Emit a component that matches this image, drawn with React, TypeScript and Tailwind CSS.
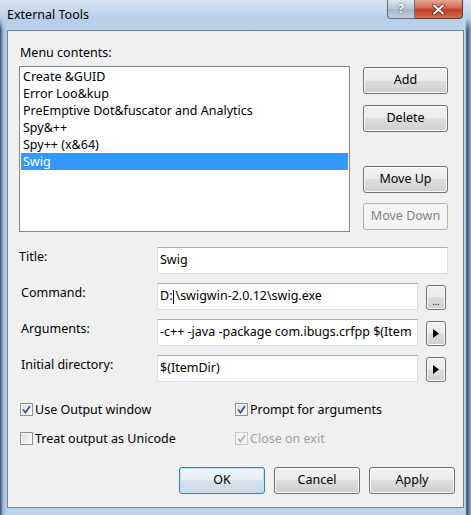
import { useState } from "react";

const items = [
  "Create &GUID",
  "Error Loo&kup",
  "PreEmptive Dot&fuscator and Analytics",
  "Spy&++",
  "Spy++ (x&64)",
  "Swig",
];

const btn =
  "flex items-center justify-center rounded-[3px] border border-[#707070] bg-[linear-gradient(to_bottom,#f2f2f2_0%,#ebebeb_50%,#dddddd_50%,#cfcfcf_100%)] shadow-[inset_0_0_0_1px_#fbfbfb] text-black";
const btnDisabled =
  "flex items-center justify-center rounded-[3px] border border-[#adb2b5] bg-[#f4f4f4] text-[#838383]";
const input =
  "h-[27px] border border-[#dbdfe6] border-t-[#abadb3] bg-white pl-[2px] flex items-center overflow-hidden whitespace-nowrap";

function Check({ checked, disabled }: { checked?: boolean; disabled?: boolean }) {
  return (
    <div
      className={
        "w-[13px] h-[13px] shrink-0 border flex items-center justify-center " +
        (disabled
          ? "border-[#c7c7c7] bg-[#f4f4f4]"
          : "border-[#8e8f8f] bg-[linear-gradient(135deg,#dcdcdc,#fbfbfb)] shadow-[inset_0_0_0_1px_#f4f4f4]")
      }
    >
      {checked && (
        <svg width="9" height="9" viewBox="0 0 9 9">
          <path
            d="M1 4.5 L3.5 7.5 L8 1"
            fill="none"
            stroke={disabled ? "#b0b0b0" : "#3c4f8c"}
            strokeWidth="1.8"
          />
        </svg>
      )}
    </div>
  );
}

function Arrow() {
  return (
    <svg width="6" height="9" viewBox="0 0 6 9">
      <path d="M0 0 L6 4.5 L0 9 Z" fill="#000" />
    </svg>
  );
}

export default function App() {
  const [selected, setSelected] = useState(5);

  return (
    <div className="w-[471px] h-[515px] overflow-hidden flex flex-col font-['Noto_Sans',sans-serif] text-[12.5px] text-black bg-[linear-gradient(to_right,#33496e_0px,#9db8d8_3px,#bcd2ea_7px,#bcd2ea_463px,#c9dcef_465px,#3a5177_467px,#8ea9c9_471px)]">
      {/* title bar */}
      <div className="h-[30px] flex items-start shrink-0 bg-[linear-gradient(to_bottom,#d6e4f3,#b9cfe8_60%,transparent)]">
        <span className="pl-[7px] pt-[7px] leading-[16px]">External Tools</span>
        <div className="ml-auto mr-[8px] flex">
          <div className="w-[28px] h-[19px] border border-t-0 border-[#5d6f88] rounded-bl-[4px] bg-[linear-gradient(to_bottom,#dfe6ee,#b7c4d4_50%,#a3b3c8_50%,#c3d0df)] flex items-center justify-center text-white font-bold text-[12px] [text-shadow:0_0_2px_#33445c]">
            ?
          </div>
          <div className="w-[48px] h-[19px] border border-t-0 border-l-0 border-[#5d3a36] rounded-br-[4px] bg-[linear-gradient(to_bottom,#e8a493,#d4664f_45%,#c13b22_55%,#d86a4f)] flex items-center justify-center">
            <svg width="13" height="11" viewBox="0 0 13 11">
              <path d="M2 1.5 L11 9.5 M11 1.5 L2 9.5" stroke="#4a2019" strokeWidth="3.6" strokeLinecap="round" />
              <path d="M2 1.5 L11 9.5 M11 1.5 L2 9.5" stroke="#fff" strokeWidth="2.2" strokeLinecap="round" />
            </svg>
          </div>
        </div>
      </div>

      {/* client area */}
      <div className="mx-[7px] w-[457px] h-[478px] border border-[#6d819b] bg-[#f0f0f0] flex flex-col pl-[11px] pt-[14px]">
        <div className="leading-[16px] pl-[1px]">Menu contents:</div>

        <div className="mt-[5px] flex">
          <div className="w-[331px] h-[166px] border border-[#828790] bg-white p-[1px]">
            {items.map((t, i) => (
              <div
                key={t}
                onClick={() => setSelected(i)}
                className={
                  "h-[17px] leading-[17px] pl-[2px] whitespace-nowrap " +
                  (i === selected ? "bg-[#3399ff] text-white" : "")
                }
              >
                {t}
              </div>
            ))}
          </div>
          <div className="ml-[13px] w-[85px] flex flex-col pt-[1px]">
            <button className={btn + " h-[27px]"}>Add</button>
            <button className={btn + " h-[27px] mt-[11px]"}>Delete</button>
            <button className={btn + " h-[27px] mt-[34px]"}>Move Up</button>
            <button className={btnDisabled + " h-[27px] mt-[10px]"}>Move Down</button>
          </div>
        </div>

        {/* fields */}
        <div className="mt-[15px] flex flex-col gap-[9px]">
          <div className="flex">
            <div className="w-[138px] pt-[2px] leading-[16px]">Title:</div>
            <div className={input + " w-[291px]"}>Swig</div>
          </div>
          <div className="flex">
            <div className="w-[138px] pt-[2px] pl-[2px] leading-[16px]">Command:</div>
            <div className={input + " w-[261px] border-[#a9c2dc] border-t-[#7f9fc2]"}>
              D:<span className="inline-block w-[1px] h-[14px] bg-black mx-[1px]" />\swigwin-2.0.12\swig.exe
            </div>
            <button className={btn + " ml-[8px] mt-[2px] w-[20px] h-[25px] items-end pb-[3px] text-[9px] leading-[9px]"}>
              ...
            </button>
          </div>
          <div className="flex">
            <div className="w-[138px] pt-[2px] pl-[2px] leading-[16px]">Arguments:</div>
            <div className={input + " w-[261px]"}>-c++ -java -package com.ibugs.crfpp $(Item</div>
            <button className={btn + " ml-[8px] mt-[2px] w-[20px] h-[25px]"}>
              <Arrow />
            </button>
          </div>
          <div className="flex">
            <div className="w-[138px] pt-[2px] pl-[2px] leading-[16px]">Initial directory:</div>
            <div className={input + " w-[261px]"}>$(ItemDir)</div>
            <button className={btn + " ml-[8px] mt-[2px] w-[20px] h-[25px]"}>
              <Arrow />
            </button>
          </div>
        </div>

        {/* checkboxes */}
        <div className="mt-[21px] grid grid-cols-[215px_1fr] gap-y-[16px] pl-[1px]">
          <div className="flex items-center gap-[2px] h-[13px]">
            <Check checked />
            <span className="leading-[16px]">Use Output window</span>
          </div>
          <div className="flex items-center gap-[2px] h-[13px]">
            <Check checked />
            <span className="leading-[16px]">Prompt for arguments</span>
          </div>
          <div className="flex items-center gap-[2px] h-[13px]">
            <Check />
            <span className="leading-[16px]">Treat output as Unicode</span>
          </div>
          <div className="flex items-center gap-[2px] h-[13px]">
            <Check checked disabled />
            <span className="leading-[16px] text-[#a0a0a0]">Close on exit</span>
          </div>
        </div>

        {/* dialog buttons */}
        <div className="mt-[22px] flex justify-end pr-[8px] gap-[9px]">
          <button className="w-[86px] h-[27px] flex items-center justify-center rounded-[3px] border border-[#3c7fb1] bg-[linear-gradient(to_bottom,#eef4f9_0%,#e4edf4_50%,#d6e2ec_50%,#c9d9e6_100%)] shadow-[inset_0_0_0_1px_#bfe3f6]">
            OK
          </button>
          <button className={btn + " w-[86px] h-[27px]"}>Cancel</button>
          <button className={btn + " w-[86px] h-[27px]"}>Apply</button>
        </div>
      </div>
    </div>
  );
}
